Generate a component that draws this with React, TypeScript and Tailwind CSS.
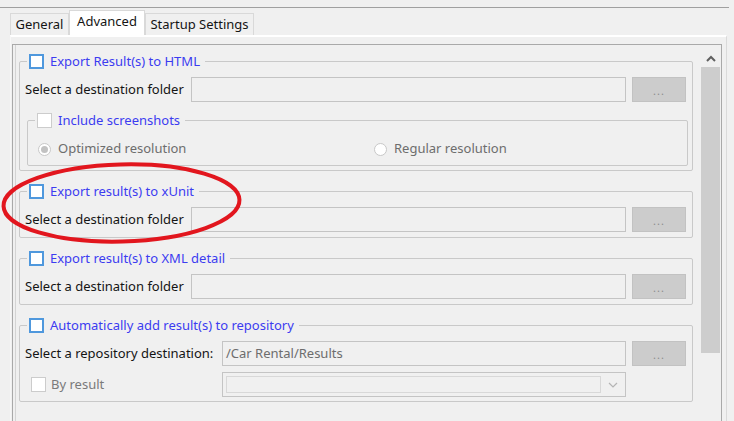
import React from "react";

function Check({ on }: { on: boolean }) {
  return on ? (
    <span className="block w-[15px] h-[15px] shrink-0 bg-white border-2 border-[#4f98dd]" />
  ) : (
    <span className="block w-[15px] h-[15px] shrink-0 bg-white border border-[#cccccc]" />
  );
}

function Radio({ checked }: { checked: boolean }) {
  return (
    <span className="flex w-[13px] h-[13px] shrink-0 rounded-full border border-[#c8c8c8] bg-white items-center justify-center">
      {checked && <span className="block w-[7px] h-[7px] rounded-full bg-[#c2c2c2]" />}
    </span>
  );
}

function Legend({ text, on }: { text: string; on: boolean }) {
  return (
    <legend className="ml-[7px] pl-[2px] pr-[5px]">
      <span className="flex h-[15px] items-center gap-[6px] text-[#3c3cf0] leading-[15px]">
        <Check on={on} />
        <span>{text}</span>
      </span>
    </legend>
  );
}

function Field({ value }: { value?: string }) {
  return (
    <div className="flex-1 h-[25px] border border-[#c4c4c4] bg-[#f0f0f0] flex items-center pl-[3px] text-[#6d6d6d] leading-none">
      {value}
    </div>
  );
}

function Dots() {
  return (
    <div className="w-[54px] h-[25px] shrink-0 bg-[#cccccc] border border-[#c2c2c2] flex items-center justify-center text-[#8c8c8c] text-[11px] tracking-[1px] leading-none pt-[2px]">
      ...
    </div>
  );
}

function FolderGroup({ title }: { title: string }) {
  return (
    <fieldset className="w-[674px] mt-[13px] border border-[#c9c9c9] rounded-[2px]">
      <Legend text={title} on={true} />
      <div className="pl-[5px] pr-[6px] pt-[8px] pb-[5px]">
        <div className="flex items-center gap-[6px]">
          <div className="w-[160px] shrink-0">Select a destination folder</div>
          <Field />
          <Dots />
        </div>
      </div>
    </fieldset>
  );
}

export default function App() {
  return (
    <div className="relative w-[734px] h-[421px] overflow-hidden bg-[#f0f0f0] text-[13px] text-[#141414] [font-family:'Noto_Sans','Segoe_UI',sans-serif]">
      <div className="h-[8px] w-[729px] border-b border-[#a0a0a0]" />
      <div className="flex items-end pl-[10px] pt-[2px] h-[27px]">
        <div className="w-[59px] h-[22px] border border-b-0 border-[#d9d9d9] flex items-center justify-center leading-none">
          General
        </div>
        <div className="w-[76px] h-[25px] bg-white border border-b-0 border-[#d9d9d9] flex items-center justify-center leading-none pb-[3px]">
          Advanced
        </div>
        <div className="w-[109px] h-[22px] border border-b-0 border-[#d9d9d9] flex items-center justify-center leading-none">
          Startup Settings
        </div>
      </div>
      <div className="ml-[10px] w-[717px] h-[390px] border-t-2 border-white border-l border-l-[#f7f7f7] border-r border-r-[#dadada]">
        <div className="ml-[1px] mt-[7px] w-[710px] h-[400px] border border-[#a9a9a9] flex">
          <div className="w-[687px] flex">
            <div className="ml-[2px] flex-1 border-l border-[#d4d4d4] pl-[3px] pt-[9px]">
              {/* Group 1 */}
              <fieldset className="w-[674px] border border-[#c9c9c9] rounded-[2px]">
                <Legend text="Export Result(s) to HTML" on={true} />
                <div className="pl-[5px] pr-[6px] pt-[8px] pb-[4px]">
                  <div className="flex items-center gap-[6px]">
                    <div className="w-[160px] shrink-0">Select a destination folder</div>
                    <Field />
                    <Dots />
                  </div>
                  <fieldset className="mt-[11px] ml-[2px] mr-[-2px] border border-[#c9c9c9] rounded-[2px]">
                    <legend className="ml-[7px] pl-[2px] pr-[5px]">
                      <span className="flex h-[15px] items-center gap-[6px] text-[#3c3cf0] leading-[15px]">
                        <Check on={false} />
                        <span>Include screenshots</span>
                      </span>
                    </legend>
                    <div className="pl-[10px] pt-[11px] pb-[6px]">
                      <div className="flex h-[20px] items-center text-[#6d6d6d]">
                        <div className="w-[336px] flex items-center gap-[7px]">
                          <Radio checked={true} />
                          <span>Optimized resolution</span>
                        </div>
                        <div className="flex items-center gap-[7px]">
                          <Radio checked={false} />
                          <span>Regular resolution</span>
                        </div>
                      </div>
                    </div>
                  </fieldset>
                </div>
              </fieldset>

              <FolderGroup title="Export result(s) to xUnit" />
              <FolderGroup title="Export result(s) to XML detail" />

              {/* Group 4 */}
              <fieldset className="w-[674px] mt-[13px] border border-[#c9c9c9] rounded-[2px]">
                <Legend text="Automatically add result(s) to repository" on={true} />
                <div className="pl-[5px] pr-[6px] pt-[8px] pb-[4px]">
                  <div className="flex items-center gap-[6px]">
                    <div className="w-[191px] shrink-0">Select a repository destination:</div>
                    <Field value="/Car Rental/Results" />
                    <Dots />
                  </div>
                  <div className="flex items-center mt-[6px]">
                    <div className="w-[197px] shrink-0 flex items-center gap-[5px] pl-[6px] text-[#7a7a7a]">
                      <Check on={false} />
                      <span>By result</span>
                    </div>
                    <div className="flex-1 h-[25px] border border-[#c4c4c4] bg-[#f0f0f0] flex p-[3px] pr-0">
                      <div className="flex-1 border border-[#d8d8d8]" />
                      <div className="w-[24px] flex items-center justify-center">
                        <svg width="10" height="6" viewBox="0 0 10 6">
                          <path d="M1 1 L5 5 L9 1" fill="none" stroke="#b4b4b4" strokeWidth="1.2" />
                        </svg>
                      </div>
                    </div>
                    <div className="w-[60px] shrink-0" />
                  </div>
                </div>
              </fieldset>
            </div>
          </div>
          {/* Scrollbar */}
          <div className="w-[21px] flex flex-col">
            <div className="h-[22px] flex items-center justify-center pt-[5px]">
              <svg width="10" height="7" viewBox="0 0 10 7">
                <path d="M1 6 L5 2 L9 6" fill="none" stroke="#606060" strokeWidth="2" />
              </svg>
            </div>
            <div className="px-[1px]">
              <div className="h-[286px] bg-[#cdcdcd]" />
            </div>
          </div>
        </div>
      </div>

      <svg className="absolute left-0 top-0 pointer-events-none" width="734" height="421">
        <ellipse
          cx="121.5"
          cy="203"
          rx="118"
          ry="38.5"
          fill="none"
          stroke="#e2161e"
          strokeWidth="4"
          transform="rotate(-1.5 121.5 203)"
        />
      </svg>
    </div>
  );
}
